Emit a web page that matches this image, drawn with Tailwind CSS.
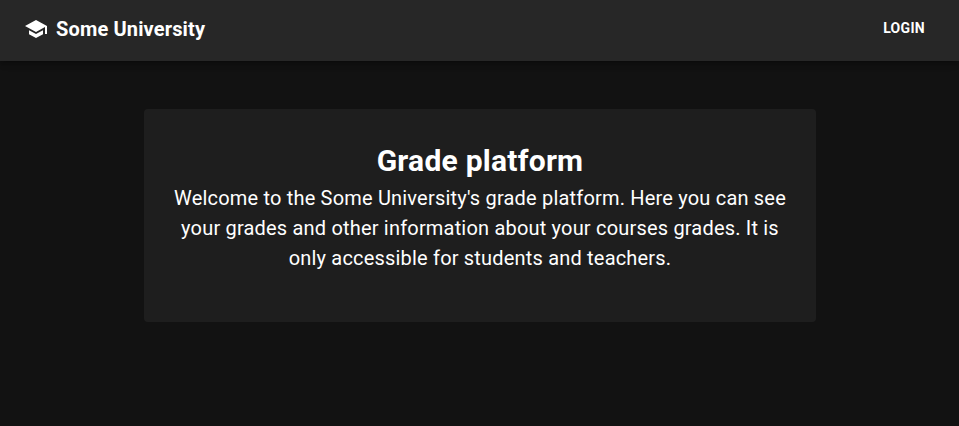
<!DOCTYPE html>
<html lang="en">
<head>
    <meta charset="UTF-8">
    <meta name="viewport" content="width=device-width, initial-scale=1.0">
    <title>Some University - Grade platform</title>
    <script src="https://cdn.jsdelivr.net/npm/@tailwindcss/browser@4"></script>
</head>
<body class="bg-[#121212] min-h-screen font-['Roboto',sans-serif] text-white">
    <header class="h-[61px] bg-[#272727] flex items-center justify-between pl-6 pr-[26px] pb-1 shadow-[0_2px_4px_-1px_rgba(0,0,0,0.2),0_4px_5px_0_rgba(0,0,0,0.14),0_1px_10px_0_rgba(0,0,0,0.12)]">
        <div class="flex items-center">
            <svg class="w-6 h-6 mr-2 fill-white" viewBox="0 0 24 24">
                <path d="M5 13.18v4L12 21l7-3.82v-4L12 17l-7-3.82zM12 3 1 9l11 6 9-4.91V17h2V9L12 3z"></path>
            </svg>
            <span class="text-xl font-bold leading-8 tracking-[0.15px]">Some University</span>
        </div>
        <button class="px-2 pt-[5px] pb-[7px] text-sm font-bold leading-[24px] tracking-[0.3px] uppercase">Login</button>
    </header>

    <main class="flex justify-center pt-12">
        <div class="w-[672px] h-[213px] bg-[#1e1e1e] rounded pl-[24.5px] pr-[23.5px] pt-9 text-center">
            <h1 class="text-3xl font-bold leading-8 tracking-[0.25px]">Grade platform</h1>
            <p class="text-xl leading-[30px] mt-1.5 tracking-[0.1876px]">Welcome to the Some University's grade platform. Here you can see your grades and other information about your courses grades. It is only accessible for students and teachers.</p>
        </div>
    </main>
</body>
</html>
